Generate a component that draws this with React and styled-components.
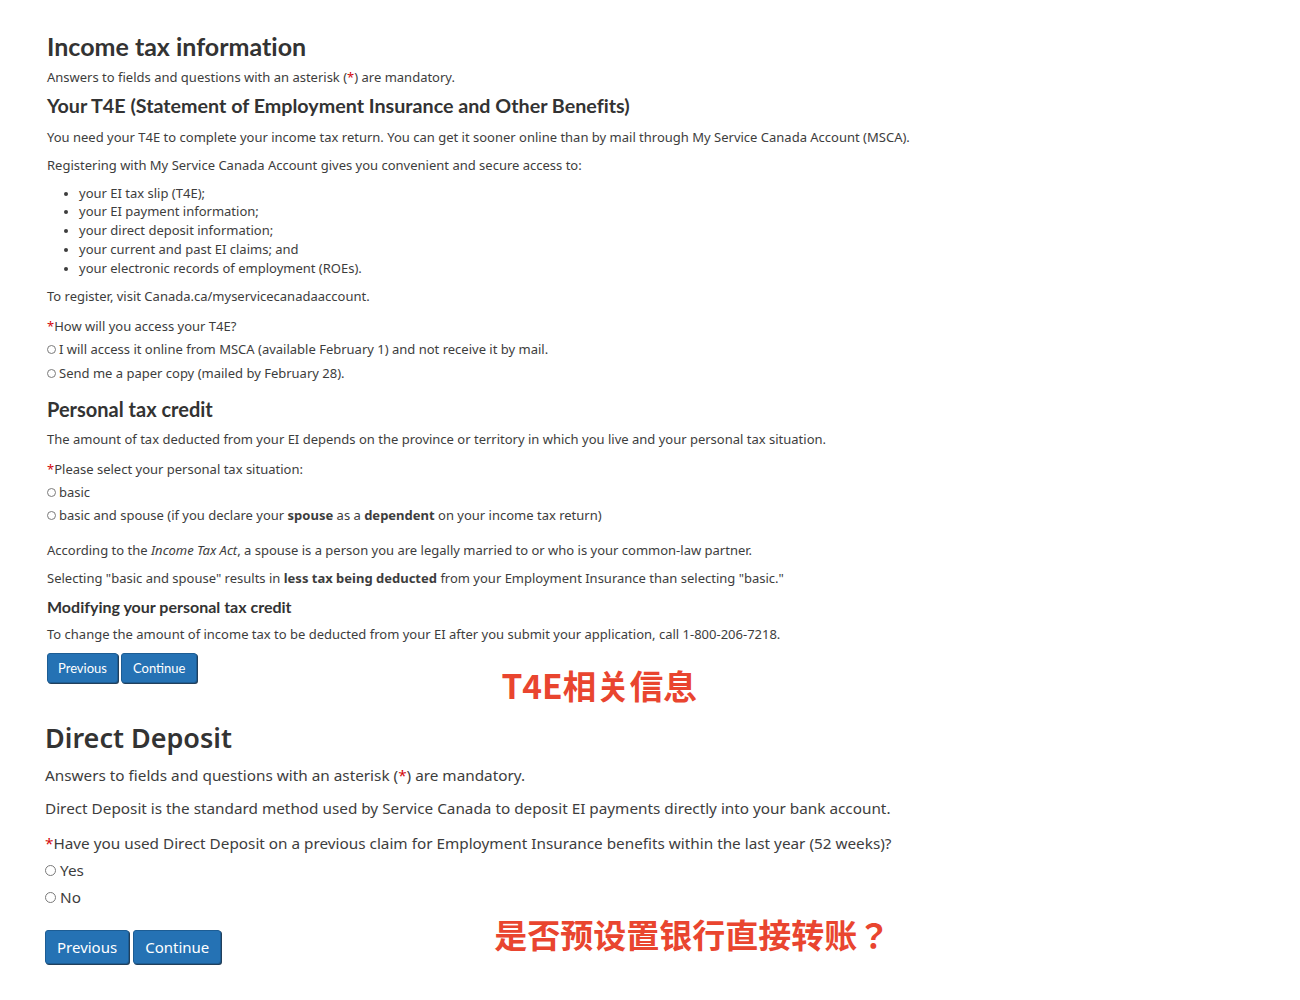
import React from "react";
import styled, { createGlobalStyle } from "styled-components";

const Global = createGlobalStyle`
  html, body { margin: 0; padding: 0; background: #fff; }
  body { font-family: "Noto Sans", "Open Sans", sans-serif; color: #3d3d3d; font-variant-ligatures: none; }
  * { box-sizing: border-box; }
`;

const Page = styled.div`
  padding: 31px 0 40px 0;
  width: 1300px;
`;

const Section = styled.section`
  padding-left: ${(p) => p.$left}px;
  margin-top: ${(p) => p.$mt || 0}px;
  font-size: ${(p) => p.$fs}px;
  display: flex;
  flex-direction: column;
  align-items: flex-start;
`;

const Title = styled.h1`
  margin: 0;
  font-family: ${(p) => (p.$big ? '"Noto Sans"' : "Lato")}, sans-serif;
  font-weight: ${(p) => (p.$big ? 600 : 700)};
  font-size: ${(p) => p.$size}px;
  line-height: ${(p) => p.$lh}px;
  color: #333;
`;

const Sub = styled.h2`
  margin: ${(p) => p.$mt}px 0 0 0;
  font-family: Lato, sans-serif;
  font-weight: 700;
  font-size: ${(p) => p.$size}px;
  line-height: ${(p) => p.$lh}px;
  color: #333;
`;

const Text = styled.p`
  margin: ${(p) => p.$mt}px 0 0 0;
  line-height: ${(p) => p.$lh}px;
  white-space: nowrap;
`;

const Star = styled.span`
  color: #d3080c;
`;

const Bullets = styled.ul`
  margin: ${(p) => p.$mt}px 0 0 0;
  padding-left: 32px;
  line-height: 18.75px;
  li::marker { font-size: 0.9em; }
`;

const Radio = styled.label`
  margin-top: ${(p) => p.$mt}px;
  display: flex;
  align-items: center;
  gap: ${(p) => p.$gap}px;
  line-height: ${(p) => p.$lh}px;
  white-space: nowrap;
`;

const Circle = styled.span`
  width: ${(p) => p.$d}px;
  height: ${(p) => p.$d}px;
  margin-top: 1px;
  border-radius: 50%;
  border: 1px solid #7a7a7a;
  background: #fff;
  flex: none;
`;

const ButtonRow = styled.div`
  margin-top: ${(p) => p.$mt}px;
  display: flex;
  align-items: flex-start;
`;

const Button = styled.button`
  font-family: ${(p) => (p.$big ? '"Noto Sans"' : "Lato")}, sans-serif;
  font-size: ${(p) => p.$fs}px;
  height: ${(p) => p.$h}px;
  padding: 0 ${(p) => p.$px}px;
  margin-right: ${(p) => p.$gap}px;
  background: #2572b4;
  color: #fff;
  border: 1px solid #1d5d94;
  border-radius: 3px;
  box-shadow: 1px 1px 0 #22405c;
  cursor: pointer;
`;

const Note = styled.div`
  font-family: "Noto Sans CJK JP", "Noto Sans CJK SC", "Noto Sans", sans-serif;
  font-weight: 700;
  font-size: ${(p) => p.$fs}px;
  line-height: 40px;
  height: 40px;
  color: #e9452f;
  margin-left: ${(p) => p.$ml}px;
  margin-top: ${(p) => p.$mt}px;
  margin-bottom: -40px;
  white-space: nowrap;
`;

export default function App() {
  return (
    <Page>
      <Global />
      <Section $left={47} $fs={13}>
        <Title $size={25} $lh={30}>Income tax information</Title>
        <Text $mt={7} $lh={18}>
          Answers to fields and questions with an asterisk (<Star>*</Star>) are mandatory.
        </Text>
        <Sub $mt={7} $size={19.7} $lh={26}>
          Your T4E (Statement of Employment Insurance and Other Benefits)
        </Sub>
        <Text $mt={9} $lh={18}>
          You need your T4E to complete your income tax return. You can get it sooner online than by mail through My Service Canada Account (MSCA).
        </Text>
        <Text $mt={10} $lh={18}>
          Registering with My Service Canada Account gives you convenient and secure access to:
        </Text>
        <Bullets $mt={9.5}>
          <li>your EI tax slip (T4E);</li>
          <li>your EI payment information;</li>
          <li>your direct deposit information;</li>
          <li>your current and past EI claims; and</li>
          <li>your electronic records of employment (ROEs).</li>
        </Bullets>
        <Text $mt={9.5} $lh={18}>To register, visit Canada.ca/myservicecanadaaccount.</Text>
        <Text $mt={12} $lh={18}>
          <Star>*</Star>How will you access your T4E?
        </Text>
        <Radio $mt={5} $gap={3} $lh={18}>
          <Circle $d={9} />I will access it online from MSCA (available February 1) and not receive it by mail.
        </Radio>
        <Radio $mt={6} $gap={3} $lh={18}>
          <Circle $d={9} />Send me a paper copy (mailed by February 28).
        </Radio>
        <Sub $mt={14} $size={20} $lh={26}>Personal tax credit</Sub>
        <Text $mt={8} $lh={18}>
          The amount of tax deducted from your EI depends on the province or territory in which you live and your personal tax situation.
        </Text>
        <Text $mt={12} $lh={18}>
          <Star>*</Star>Please select your personal tax situation:
        </Text>
        <Radio $mt={5} $gap={3} $lh={18}>
          <Circle $d={9} />basic
        </Radio>
        <Radio $mt={5} $gap={3} $lh={18}>
          <Circle $d={9} />
          <span>
            basic and spouse (if you declare your <b>spouse</b> as a <b>dependent</b> on your income tax return)
          </span>
        </Radio>
        <Text $mt={17} $lh={18}>
          According to the <i>Income Tax Act</i>, a spouse is a person you are legally married to or who is your common-law partner.
        </Text>
        <Text $mt={10} $lh={18}>
          Selecting "basic and spouse" results in <b>less tax being deducted</b> from your Employment Insurance than selecting "basic."
        </Text>
        <Sub $mt={9} $size={16} $lh={22}>Modifying your personal tax credit</Sub>
        <Text $mt={7} $lh={18}>
          To change the amount of income tax to be deducted from your EI after you submit your application, call 1-800-206-7218.
        </Text>
        <ButtonRow $mt={10}>
          <Button $fs={13} $h={30} $px={10} $gap={3}>Previous</Button>
          <Button $fs={13} $h={30} $px={11} $gap={0}>Continue</Button>
          <Note $fs={33.5} $ml={304} $mt={12}>T4E相关信息</Note>
        </ButtonRow>
      </Section>

      <Section $left={45} $fs={15.3} $mt={37}>
        <Title $big $size={27} $lh={36}>Direct Deposit</Title>
        <Text $mt={8} $lh={22}>
          Answers to fields and questions with an asterisk (<Star>*</Star>) are mandatory.
        </Text>
        <Text $mt={11} $lh={22}>
          Direct Deposit is the standard method used by Service Canada to deposit EI payments directly into your bank account.
        </Text>
        <Text $mt={13} $lh={22}>
          <Star>*</Star>Have you used Direct Deposit on a previous claim for Employment Insurance benefits within the last year (52 weeks)?
        </Text>
        <Radio $mt={5} $gap={4} $lh={22}>
          <Circle $d={11} />Yes
        </Radio>
        <Radio $mt={5} $gap={4} $lh={22}>
          <Circle $d={11} />No
        </Radio>
        <ButtonRow $mt={22}>
          <Button $big $fs={15} $h={34} $px={11} $gap={4}>Previous</Button>
          <Button $big $fs={15} $h={34} $px={11} $gap={0}>Continue</Button>
          <Note $fs={33} $ml={273} $mt={-16}>是否预设置银行直接转账？</Note>
        </ButtonRow>
      </Section>
    </Page>
  );
}
